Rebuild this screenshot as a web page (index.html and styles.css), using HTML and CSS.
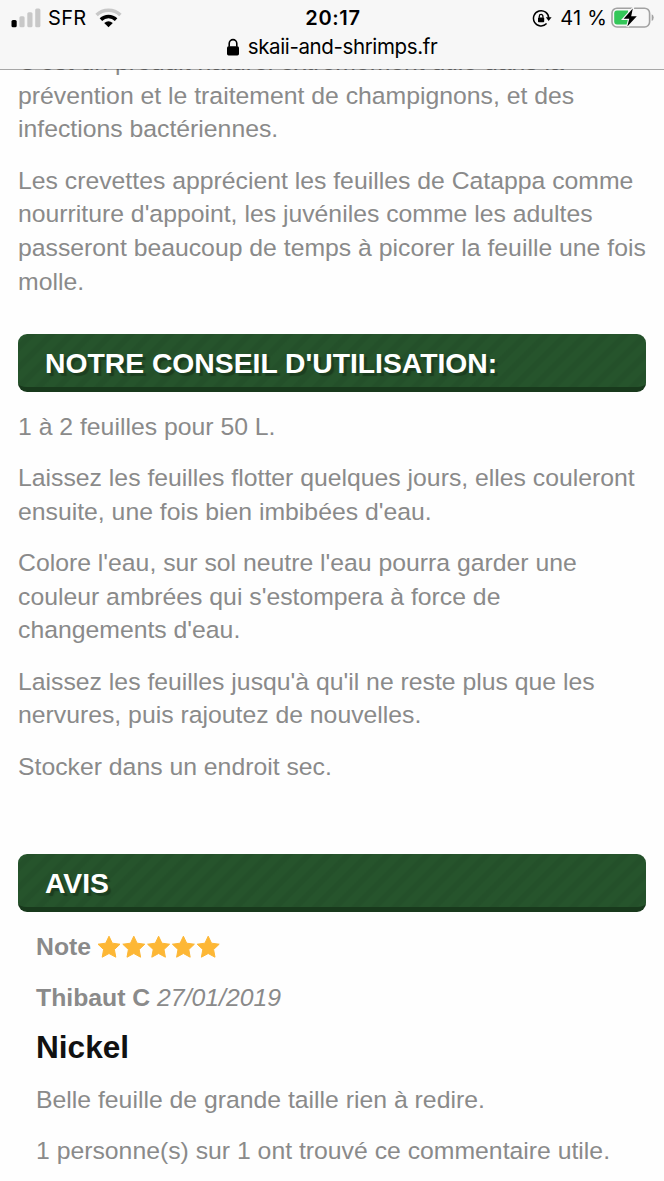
FILE: index.html
```
<!doctype html>
<html lang="fr">

<head>
	<meta charset="utf-8">
	<title>Skaii and Shrimps</title>
	<meta name="viewport" content="width=device-width, initial-scale=1">
	<link rel="stylesheet" href="styles.css">
</head>

<body>
	<header class="browser">
		<div class="status">
			<div class="left">
				<svg class="signal" width="30" height="20" viewBox="0 0 30 20">
					<rect x="0.5" y="12" width="5.2" height="7.2" rx="1.5" fill="#000"/>
					<g fill="#c8c8c8">
						<rect x="8.4" y="8.3" width="5.2" height="10.9" rx="1.5"/>
						<rect x="16.3" y="4.3" width="5.2" height="14.9" rx="1.5"/>
						<rect x="24.2" y="0.5" width="5.2" height="18.7" rx="1.5"/>
					</g>
				</svg>
				<span class="carrier">SFR</span>
				<svg class="wifi" width="27" height="20" viewBox="0 0 27 20">
					<path d="M1.6 7A17.4 17.4 0 0 1 25.4 7" fill="none" stroke="#c8c8c8" stroke-width="3.6"/>
					<path d="M5.9 11.6A11 11 0 0 1 21.1 11.6" fill="none" stroke="#000" stroke-width="3.6"/>
					<path d="M13.5 19.2L9.2 14.9Q13.5 11.7 17.8 14.9Z" fill="#000"/>
				</svg>
			</div>
			<div class="clock">20:17</div>
			<div class="right">
				<svg class="rotation" width="20" height="20" viewBox="0 0 20 20">
					<path d="M14.6 14.6A7.6 7.6 0 1 1 16.7 9.2" fill="none" stroke="#000" stroke-width="1.5"/>
					<path d="M13.8 8.2H19.6L16.7 12Z" fill="#000"/>
					<rect x="6" y="8.4" width="6.2" height="4.9" rx="0.7" fill="#000"/>
					<path d="M7.3 8.8V7.2A1.8 1.8 0 0 1 10.9 7.2V8.8" fill="none" stroke="#000" stroke-width="1.3"/>
				</svg>
				<span class="percent">41 %</span>
				<svg class="battery" width="44" height="22" viewBox="0 0 44 22">
					<rect x="1" y="1.2" width="37.6" height="18.8" rx="5" fill="none" stroke="#a2a2a2" stroke-width="1.6"/>
					<path d="M40.7 7.2Q42.7 8 42.7 10.6T40.7 14Z" fill="#a2a2a2"/>
					<path d="M6 3.6H17V17.6H6Q3.2 17.6 3.2 14.6V6.6Q3.2 3.6 6 3.6Z" fill="#34c759"/>
					<path d="M21.8 1.6L12.7 11.8H18.3L16.3 19.6L25.8 9.2H20.2Z" fill="#000" stroke="#f7f7f7" stroke-width="2.4" paint-order="stroke"/>
				</svg>
			</div>
		</div>
		<div class="url">
			<svg width="12" height="18" viewBox="0 0 12 18">
				<rect x="0" y="8.2" width="12" height="9.2" rx="1.6"/>
				<path d="M2.2 8.8V5.4A3.8 3.8 0 0 1 9.8 5.4V8.8" fill="none" stroke="#000" stroke-width="1.6"/>
			</svg>
			<span>skaii-and-shrimps.fr</span>
		</div>
	</header>

	<main>
		<p>C'est un produit naturel extrêmement utile dans la<br>prévention et le traitement de champignons, et des<br>infections bactériennes.</p>
		<p>Les crevettes apprécient les feuilles de Catappa comme<br>nourriture d'appoint, les juvéniles comme les adultes<br>passeront beaucoup de temps à picorer la feuille une fois<br>molle.</p>

		<h3 class="conseil">Notre conseil d'utilisation:</h3>
		<p>1 à 2 feuilles pour 50 L.</p>
		<p>Laissez les feuilles flotter quelques jours, elles couleront<br>ensuite, une fois bien imbibées d'eau.</p>
		<p>Colore l'eau, sur sol neutre l'eau pourra garder une<br>couleur ambrées qui s'estompera à force de<br>changements d'eau.</p>
		<p>Laissez les feuilles jusqu'à qu'il ne reste plus que les<br>nervures, puis rajoutez de nouvelles.</p>
		<p>Stocker dans un endroit sec.</p>

		<h3 class="avis">Avis</h3>
		<section class="comment">
			<div class="note">
				<strong>Note</strong>
				<svg width="124" height="24" viewBox="0 0 124 24">
					<defs>
						<path id="star" d="M12 1.2L15.3 8.2L23 9.2L17.4 14.5L18.8 22.2L12 18.5L5.2 22.2L6.6 14.5L1 9.2L8.7 8.2Z" fill="#fdb735" stroke="#fdb735" stroke-width="1" stroke-linejoin="round"/>
					</defs>
					<use href="#star"/>
					<use href="#star" x="24.8"/>
					<use href="#star" x="49.6"/>
					<use href="#star" x="74.4"/>
					<use href="#star" x="99.2"/>
				</svg>
			</div>
			<p><strong>Thibaut C</strong> <em>27/01/2019</em></p>
			<h4>Nickel</h4>
			<p>Belle feuille de grande taille rien à redire.</p>
			<p>1 personne(s) sur 1 ont trouvé ce commentaire utile.</p>
		</section>
	</main>
</body>
</html>
```
FILE: styles.css
```
*, *:after, *:before{
	box-sizing: border-box;
}

html, body{
	height: 100%;
	margin: 0; padding: 0;
	overflow: hidden;
}

body{
	background-color: #fefefe;
	color: #8a8a8a;
	font: 24.77px/33.64px "Liberation Sans", Arial, sans-serif;
}

/* Safari bar */
.browser{
	position: fixed;
	top: 0; left: 0; right: 0;
	height: 70px;
	padding-top: 7px;
	background-color: #f7f7f7;
	background-clip: padding-box;
	border-bottom: 1px solid rgba(0, 0, 0, 0.34);
	color: #000;
	font-family: Inter, "Liberation Sans", sans-serif;
}

.status{
	display: grid;
	grid-template-columns: 1fr auto 1fr;
	align-items: center;
	height: 23px;
	padding: 0 9px 0 11px;
	font-size: 20px;
	line-height: 23px;
}

.left, .right{
	display: flex;
	align-items: center;
}

.right{
	justify-content: flex-end;
}

.signal, .wifi{
	margin-top: -2px;
}

.carrier{
	margin: 0 9px 0 7px;
	letter-spacing: 0.3px;
}

.clock{
	font-weight: 600;
	letter-spacing: 0.7px;
}

.rotation{
	margin-right: 8px;
}

.percent{
	margin-right: 4px;
	letter-spacing: 0.2px;
}

.battery{
	margin-top: -1px;
}

.url{
	display: flex;
	justify-content: center;
	align-items: center;
	gap: 9px;
	height: 34px;
	font-size: 20.5px;
	line-height: 34px;
	letter-spacing: -0.38px;
}

/* page */
main{
	padding: 45px 18px 0;
}

p{
	margin: 0 0 17.7px;
	white-space: nowrap;
}

h3{
	height: 58px;
	margin: 0 0 18px;
	padding-left: 27px;
	border-bottom: 5px solid #18391c;
	border-radius: 9px;
	background: repeating-linear-gradient(135deg, #26542c 0 6px, #24502a 8px 12px, #26542c 14px);
	color: #fff;
	font-size: 28.3px;
	line-height: 58px;
	text-transform: uppercase;
	text-shadow: 3px 3px 1px rgba(0, 0, 0, 0.25);
}

.conseil{
	margin-top: 35.6px;
}

.avis{
	margin-top: 70.7px;
}

.comment{
	padding-left: 18px;
}

.note{
	display: flex;
	align-items: center;
	gap: 6px;
	margin-bottom: 17.7px;
}

h4{
	margin: -3px 0 17.7px;
	color: #111;
	font-size: 31.6px;
	line-height: 35.4px;
}
```
